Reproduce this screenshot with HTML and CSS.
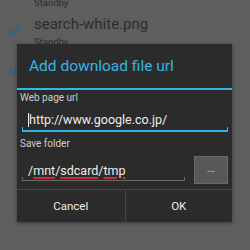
FILE: index.html
```html
<!DOCTYPE html>
<html lang="en">
<head>
  <meta charset="UTF-8">
  <title>Add download file url</title>
  <link rel="stylesheet" href="styles.css">
</head>
<body>
  <div class="list">
    <div class="item first">
      <div class="check"></div>
      <div class="info">
        <div class="status">Standby</div>
      </div>
    </div>
    <div class="item">
      <div class="check">
        <svg width="12" height="9" viewBox="0 0 12 9"><path d="M1 4.5 L4.3 7.6 L11 1" fill="none" stroke="#23688a" stroke-width="2.2"/></svg>
      </div>
      <div class="info">
        <div class="name">search-white.png</div>
        <div class="status">Standby</div>
      </div>
    </div>
    <div class="item">
      <div class="check">
        <svg width="12" height="9" viewBox="0 0 12 9"><path d="M1 4.5 L4.3 7.6 L11 1" fill="none" stroke="#23688a" stroke-width="2.2"/></svg>
      </div>
      <div class="info">
        <div class="name">image.png</div>
        <div class="status">Standby</div>
      </div>
    </div>
  </div>

  <div class="dialog">
    <div class="title">Add download file url</div>
    <div class="body">
      <div class="label">Web page url</div>
      <div class="field active"><span class="cursor"></span>http://www.google.co.jp/</div>
      <div class="label">Save folder</div>
      <div class="row">
        <div class="field">/<span class="typo">mnt</span>/<span class="typo">sdcard</span>/<span class="typo">tmp</span></div>
        <button class="pick">...</button>
      </div>
    </div>
    <div class="buttons">
      <button>Cancel</button>
      <button>OK</button>
    </div>
  </div>
</body>
</html>
```

FILE: styles.css
```css
body {
  margin: 0;
  width: 250px;
  height: 250px;
  overflow: hidden;
  position: relative;
  background: #5e5e5e;
  font-family: Roboto, "DejaVu Sans", sans-serif;
}

.item {
  display: flex;
  align-items: flex-start;
  height: 40px;
}

.item.first {
  height: 10px;
  margin-top: -3px;
}

.check {
  width: 34px;
  display: flex;
  justify-content: center;
  padding: 19px 6px 0 2px;
  box-sizing: border-box;
}

.item.first .check {
  padding-top: 0;
}

.info {
  padding-top: 8px;
}

.item.first .info {
  padding-top: 0;
}

.name {
  font-size: 15px;
  color: #2c2c2c;
  line-height: 18px;
}

.status {
  font-size: 9.5px;
  color: #2c2c2c;
  line-height: 12px;
  margin-top: 3px;
}

.item.first .status {
  margin-top: 0;
}

.dialog {
  position: absolute;
  left: 17px;
  top: 44px;
  width: 215px;
  background: #2b2b2b;
  box-shadow: 0 1px 4px rgba(0, 0, 0, 0.4);
}

.title {
  height: 44px;
  line-height: 44px;
  padding-left: 12px;
  font-size: 15.5px;
  color: #33b5e5;
  border-bottom: 2px solid #33b5e5;
}

.body {
  padding: 2px 0 5px 3px;
}

.label {
  font-size: 10px;
  color: #cfcfcf;
  line-height: 12px;
}

.field {
  position: relative;
  margin: 7px 4px 0 2px;
  padding: 0 0 1px 6px;
  font-size: 12.5px;
  line-height: 18px;
  color: #ededed;
  border-bottom: 1px solid #6a6a6a;
}

.field.active {
  border-bottom: 2px solid #33b5e5;
  margin-bottom: 6px;
}

.field::before,
.field::after {
  content: "";
  position: absolute;
  bottom: 0;
  width: 1px;
  height: 3px;
  background: #6a6a6a;
}

.field::before { left: 0; }
.field::after { right: 0; }

.field.active::before,
.field.active::after {
  background: #33b5e5;
}

.cursor {
  display: inline-block;
  width: 1px;
  height: 14px;
  background: #ededed;
  vertical-align: -3px;
}

.typo {
  text-decoration: underline solid #c8302f;
  text-decoration-thickness: 2px;
  text-underline-offset: 2px;
}

.row {
  display: flex;
  align-items: flex-end;
  gap: 9px;
  margin: 6px 4px 0 0;
}

.row .field {
  flex: 1;
  margin: 0 0 3px 2px;
  padding-bottom: 0;
}

.pick {
  width: 34px;
  height: 28px;
  background: #585858;
  border: 1px solid #696969;
  color: #e6e6e6;
  font-family: inherit;
  font-size: 10px;
  padding: 0 0 3px 0;
}

.buttons {
  display: grid;
  grid-template-columns: 1fr 1fr;
  border-top: 1px solid #464646;
  height: 32px;
}

.buttons button {
  background: transparent;
  border: none;
  color: #eeeeee;
  font-family: inherit;
  font-size: 11.5px;
  padding: 0;
}

.buttons button + button {
  border-left: 1px solid #464646;
}
```
